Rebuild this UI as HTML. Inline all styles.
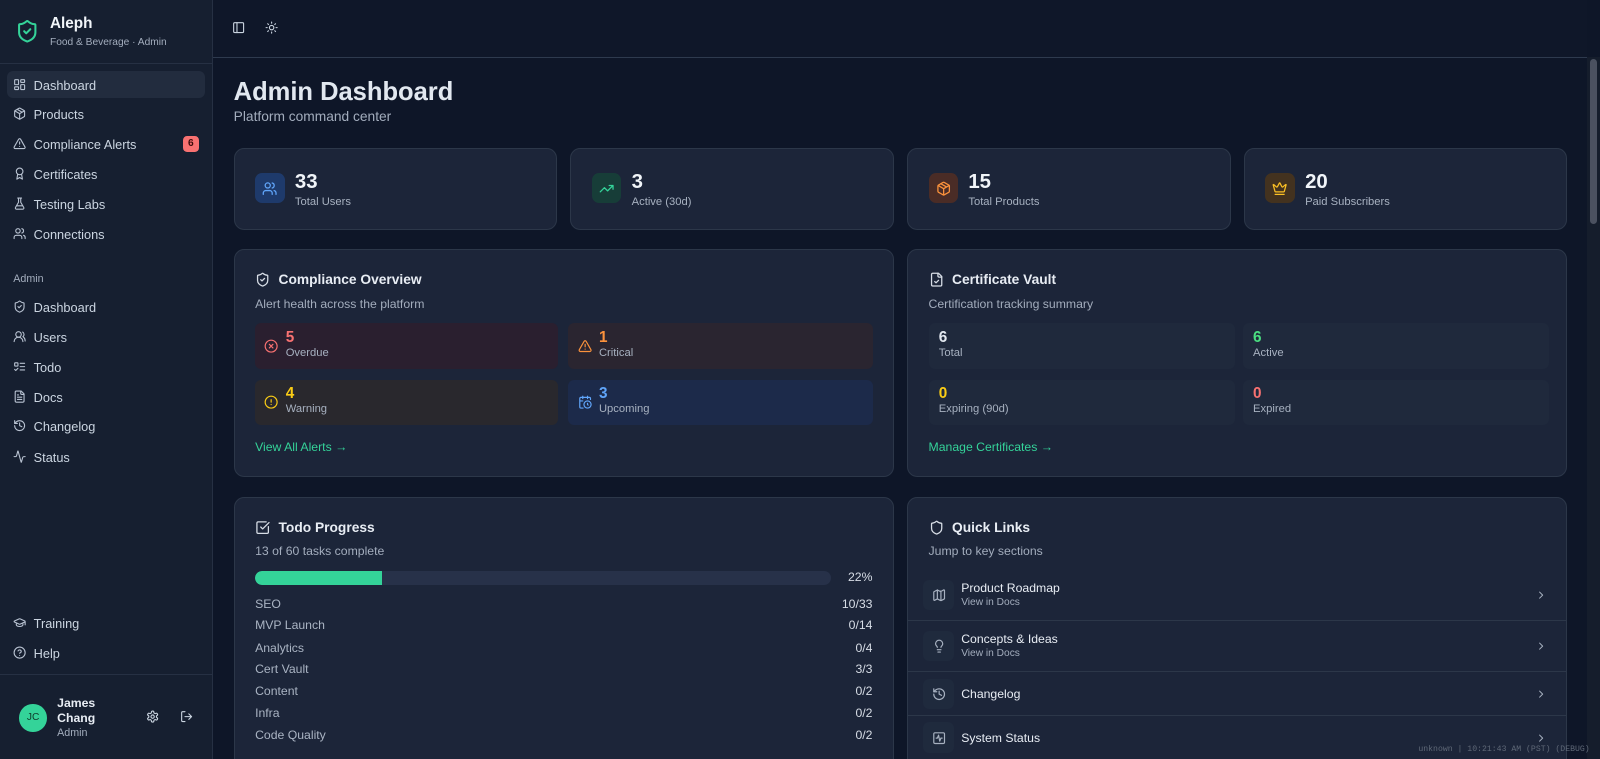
<!DOCTYPE html>
<html><head><meta charset="utf-8"><style>
html,body{margin:0;padding:0;width:1600px;height:759px;overflow:hidden;background:#0e1628;}
#w{position:relative;width:1568px;height:744px;zoom:1.02041;font-family:"Liberation Sans",sans-serif;color:#e2e8f0;}
.a{position:absolute;}
svg{position:absolute;fill:none;stroke:currentColor;stroke-width:2;stroke-linecap:round;stroke-linejoin:round;}
#sb{left:0;top:0;width:208px;height:744px;background:#161f30;border-right:1px solid #263043;}
.nav{position:absolute;left:7px;width:194px;height:26px;color:#cbd5e1;font-size:12.5px;}
.nav span{position:absolute;left:26px;top:6px;}
.nav svg{left:6px;top:6px;width:13px;height:13px;color:#b8c2d1}
.card{position:absolute;background:#1c2539;border:1px solid #2c3749;border-radius:10px;box-sizing:border-box;}
.num{position:absolute;font-size:20px;font-weight:bold;color:#f1f5f9;}
.lbl{position:absolute;font-size:11px;color:#a7b1c0;}
.ib{position:absolute;width:29px;height:29px;border-radius:7px;}
.ib svg{left:7px;top:7px;width:15px;height:15px}
.ttl{position:absolute;font-size:13.5px;font-weight:bold;color:#e8edf4;}
.sub{position:absolute;font-size:12px;color:#a3adbd;}
.tile{position:absolute;height:45px;border-radius:6px;}
.tile .n{position:absolute;left:30px;top:5px;font-size:15px;font-weight:bold;}
.tile .l{position:absolute;left:30px;top:23px;font-size:11px;color:#a7b1c0;}
.tile svg{left:9px;top:15px;width:14px;height:14px}
.ct .n,.ct .l{left:10px}
.link{position:absolute;font-size:12px;color:#34d399;}
.row{position:absolute;left:20px;right:20px;font-size:12px;color:#aab4c3;}
.row b{position:absolute;right:0;top:0;font-weight:normal;color:#d7dde6}
.ql{position:absolute;left:0;width:645px;border-top:1px solid #2c3749;}
.ql .t{position:absolute;left:52px;font-size:12px;color:#e8edf4;}
.ql .s{position:absolute;left:52px;font-size:10px;color:#a3adbd;}
.ql .ic{position:absolute;left:15px;width:30px;height:30px;border-radius:6px;background:#1f2a3d;}
.ql .ic svg{left:8px;top:8px;width:14px;height:14px;color:#a7b1c0}
.ql .ch{left:614px;width:12px;height:12px;color:#a7b1c0}
</style></head><body><div id="w">
<div class="a" id="sb">
 <svg style="left:15px;top:18px;width:24px;height:26px;color:#34d399" viewBox="0 0 24 24"><path d="M20 13c0 5-3.5 7.5-7.66 8.95a1 1 0 0 1-.67-.01C7.5 20.5 4 18 4 13V6a1 1 0 0 1 1-1c2 0 4.5-1.2 6.24-2.72a1.17 1.17 0 0 1 1.52 0C14.51 3.81 17 5 19 5a1 1 0 0 1 1 1z"/><path d="m9 12 2 2 4-4"/></svg>
 <div class="a" style="left:49px;top:15px;font-size:15px;font-weight:bold;color:#f1f5f9">Aleph</div>
 <div class="a" style="left:49px;top:36px;font-size:10px;color:#a3adbd">Food &amp; Beverage · Admin</div>
 <div class="a" style="left:0;top:62px;width:208px;border-top:1px solid #263043"></div>
 <div class="nav" style="top:70px;background:#222c3e;border-radius:6px"><svg viewBox="0 0 24 24"><rect x="3" y="3" width="7" height="9" rx="1"/><rect x="14" y="3" width="7" height="5" rx="1"/><rect x="14" y="12" width="7" height="9" rx="1"/><rect x="3" y="16" width="7" height="5" rx="1"/></svg><span>Dashboard</span></div>
 <div class="nav" style="top:99px"><svg viewBox="0 0 24 24"><path d="M11 21.7a2 2 0 0 0 2 0l7-4A2 2 0 0 0 21 16V8a2 2 0 0 0-1-1.7l-7-4a2 2 0 0 0-2 0l-7 4A2 2 0 0 0 3 8v8a2 2 0 0 0 1 1.7z"/><path d="M12 22V12M3.3 7 12 12l8.7-5M7.5 4.3l9 5.1"/></svg><span>Products</span></div>
 <div class="nav" style="top:128px"><svg viewBox="0 0 24 24"><path d="m21.7 18-8-14a2 2 0 0 0-3.5 0l-8 14A2 2 0 0 0 4 21h16a2 2 0 0 0 1.7-3"/><path d="M12 9v4M12 17h.01"/></svg><span>Compliance Alerts</span><div class="a" style="left:172px;top:5px;width:16px;height:16px;border-radius:4px;background:#f87171;color:#3b0a0a;font-size:10px;font-weight:bold;text-align:center;line-height:16px">6</div></div>
 <div class="nav" style="top:158px"><svg viewBox="0 0 24 24"><circle cx="12" cy="8" r="6"/><path d="M15.5 12.9 17 22l-5-3-5 3 1.5-9.1"/></svg><span>Certificates</span></div>
 <div class="nav" style="top:187px"><svg viewBox="0 0 24 24"><path d="M10 2v7.5L4.5 19A2 2 0 0 0 6.3 22h11.4a2 2 0 0 0 1.8-3L14 9.5V2M8.5 2h7M7 16h10"/></svg><span>Testing Labs</span></div>
 <div class="nav" style="top:216px"><svg viewBox="0 0 24 24"><path d="M16 21v-2a4 4 0 0 0-4-4H6a4 4 0 0 0-4 4v2"/><circle cx="9" cy="7" r="4"/><path d="M22 21v-2a4 4 0 0 0-3-3.9M16 3.1a4 4 0 0 1 0 7.8"/></svg><span>Connections</span></div>
 <div class="a" style="left:13px;top:268px;font-size:10.5px;color:#a3adbd">Admin</div>
 <div class="nav" style="top:288px"><svg viewBox="0 0 24 24"><path d="M20 13c0 5-3.5 7.5-7.66 8.95a1 1 0 0 1-.67-.01C7.5 20.5 4 18 4 13V6a1 1 0 0 1 1-1c2 0 4.5-1.2 6.24-2.72a1.17 1.17 0 0 1 1.52 0C14.51 3.81 17 5 19 5a1 1 0 0 1 1 1z"/><path d="m9 12 2 2 4-4"/></svg><span>Dashboard</span></div>
 <div class="nav" style="top:317px"><svg viewBox="0 0 24 24"><path d="M18 21a8 8 0 0 0-16 0"/><circle cx="10" cy="8" r="5"/><path d="M22 20c0-3.4-2-6.5-4-8a5 5 0 0 0-.45-8.3"/></svg><span>Users</span></div>
 <div class="nav" style="top:347px"><svg viewBox="0 0 24 24"><rect x="3" y="5" width="6" height="6" rx="1"/><path d="m3 17 2 2 4-4M13 6h8M13 12h8M13 18h8"/></svg><span>Todo</span></div>
 <div class="nav" style="top:376px"><svg viewBox="0 0 24 24"><path d="M15 2H6a2 2 0 0 0-2 2v16a2 2 0 0 0 2 2h12a2 2 0 0 0 2-2V7z"/><path d="M14 2v4a2 2 0 0 0 2 2h4M10 9H8M16 13H8M16 17H8"/></svg><span>Docs</span></div>
 <div class="nav" style="top:405px"><svg viewBox="0 0 24 24"><path d="M3 12a9 9 0 1 0 9-9 9.75 9.75 0 0 0-6.74 2.74L3 8"/><path d="M3 3v5h5M12 7v5l4 2"/></svg><span>Changelog</span></div>
 <div class="nav" style="top:435px"><svg viewBox="0 0 24 24"><path d="M22 12h-2.5a2 2 0 0 0-1.9 1.5l-2.4 8.4a.25.25 0 0 1-.5 0L9.2 2.1a.25.25 0 0 0-.5 0l-2.3 8.4A2 2 0 0 1 4.5 12H2"/></svg><span>Status</span></div>
 <div class="nav" style="top:598px"><svg viewBox="0 0 24 24"><path d="M21.4 10.9a1 1 0 0 0 0-1.8L12.9 5.2a2 2 0 0 0-1.7 0L2.6 9.1a1 1 0 0 0 0 1.8l8.6 3.9a2 2 0 0 0 1.7 0zM22 10v6M6 12.5V16a6 3 0 0 0 12 0v-3.5"/></svg><span>Training</span></div>
 <div class="nav" style="top:627px"><svg viewBox="0 0 24 24"><circle cx="12" cy="12" r="10"/><path d="M9.1 9a3 3 0 0 1 5.8 1c0 2-3 3-3 3M12 17h.01"/></svg><span>Help</span></div>
 <div class="a" style="left:0;top:661px;width:208px;border-top:1px solid #263043"></div>
 <div class="a" style="left:19px;top:690px;width:27px;height:27px;border-radius:50%;background:#34d399;color:#0f3b2b;font-size:10px;text-align:center;line-height:27px">JC</div>
 <div class="a" style="left:56px;top:682px;font-size:12px;font-weight:bold;line-height:15px;color:#e8edf4">James<br>Chang</div>
 <div class="a" style="left:56px;top:712px;font-size:10.5px;color:#a3adbd">Admin</div>
 <svg style="left:143px;top:696px;width:13px;height:13px;color:#cbd5e1" viewBox="0 0 24 24"><path d="M12.2 2h-.4a2 2 0 0 0-2 2v.2a2 2 0 0 1-1 1.7l-.4.3a2 2 0 0 1-2 0l-.2-.1a2 2 0 0 0-2.7.7l-.2.4a2 2 0 0 0 .7 2.7l.2.1a2 2 0 0 1 1 1.7v.5a2 2 0 0 1-1 1.7l-.2.1a2 2 0 0 0-.7 2.7l.2.4a2 2 0 0 0 2.7.7l.2-.1a2 2 0 0 1 2 0l.4.3a2 2 0 0 1 1 1.7v.2a2 2 0 0 0 2 2h.4a2 2 0 0 0 2-2v-.2a2 2 0 0 1 1-1.7l.4-.3a2 2 0 0 1 2 0l.2.1a2 2 0 0 0 2.7-.7l.2-.4a2 2 0 0 0-.7-2.7l-.2-.1a2 2 0 0 1-1-1.7v-.5a2 2 0 0 1 1-1.7l.2-.1a2 2 0 0 0 .7-2.7l-.2-.4a2 2 0 0 0-2.7-.7l-.2.1a2 2 0 0 1-2 0l-.4-.3a2 2 0 0 1-1-1.7V4a2 2 0 0 0-2-2z"/><circle cx="12" cy="12" r="3"/></svg>
 <svg style="left:176px;top:696px;width:13px;height:13px;color:#cbd5e1" viewBox="0 0 24 24"><path d="M9 21H5a2 2 0 0 1-2-2V5a2 2 0 0 1 2-2h4M16 17l5-5-5-5M21 12H9"/></svg>
</div>
<div class="a" style="left:209px;top:0;width:1346px;height:56px;border-bottom:1px solid #2e3a4e;background:#0f1729"></div>
<svg style="left:227px;top:21px;width:13px;height:13px;color:#cbd5e1" viewBox="0 0 24 24"><rect x="3" y="3" width="18" height="18" rx="2"/><path d="M9 3v18"/></svg>
<svg style="left:260px;top:21px;width:13px;height:13px;color:#cbd5e1" viewBox="0 0 24 24"><circle cx="12" cy="12" r="4"/><path d="M12 2v2M12 20v2M4.9 4.9l1.4 1.4M17.7 17.7l1.4 1.4M2 12h2M20 12h2M6.3 17.7l-1.4 1.4M19.1 4.9l-1.4 1.4"/></svg>
<div class="a" style="left:229px;top:76px;font-size:25px;font-weight:bold;color:#e2e8f0">Admin Dashboard</div>
<div class="a" style="left:229px;top:107px;font-size:13.5px;color:#a3adbd">Platform command center</div>

<div class="card" style="left:229px;top:145px;width:317px;height:80px"><div class="ib" style="left:20px;top:24px;background:#1e3a6b"><svg viewBox="0 0 24 24" style="color:#60a5fa"><path d="M16 21v-2a4 4 0 0 0-4-4H6a4 4 0 0 0-4 4v2"/><circle cx="9" cy="7" r="4"/><path d="M22 21v-2a4 4 0 0 0-3-3.9M16 3.1a4 4 0 0 1 0 7.8"/></svg></div><div class="num" style="left:59px;top:22px">33</div><div class="lbl" style="left:59px;top:46px">Total Users</div></div>
<div class="card" style="left:559px;top:145px;width:317px;height:80px"><div class="ib" style="left:20px;top:24px;background:#173d38"><svg viewBox="0 0 24 24" style="color:#34d399"><path d="m22 7-8.5 8.5-5-5L2 17M16 7h6v6"/></svg></div><div class="num" style="left:59px;top:22px">3</div><div class="lbl" style="left:59px;top:46px">Active (30d)</div></div>
<div class="card" style="left:889px;top:145px;width:317px;height:80px"><div class="ib" style="left:20px;top:24px;background:#4a2c26"><svg viewBox="0 0 24 24" style="color:#fb923c"><path d="M11 21.7a2 2 0 0 0 2 0l7-4A2 2 0 0 0 21 16V8a2 2 0 0 0-1-1.7l-7-4a2 2 0 0 0-2 0l-7 4A2 2 0 0 0 3 8v8a2 2 0 0 0 1 1.7z"/><path d="M12 22V12M3.3 7 12 12l8.7-5M7.5 4.3l9 5.1"/></svg></div><div class="num" style="left:59px;top:22px">15</div><div class="lbl" style="left:59px;top:46px">Total Products</div></div>
<div class="card" style="left:1219px;top:145px;width:317px;height:80px"><div class="ib" style="left:20px;top:24px;background:#43321f"><svg viewBox="0 0 24 24" style="color:#fbbf24"><path d="M11.6 3.3a.5.5 0 0 1 .9 0l3 5.7a1 1 0 0 0 1.5.3l4.3-3.7a.5.5 0 0 1 .8.5l-2.8 10.2a1 1 0 0 1-1 .7H5.7a1 1 0 0 1-1-.7L1.9 6.1a.5.5 0 0 1 .8-.5L7 9.3a1 1 0 0 0 1.5-.3zM5 21h14"/></svg></div><div class="num" style="left:59px;top:22px">20</div><div class="lbl" style="left:59px;top:46px">Paid Subscribers</div></div>

<div class="card" style="left:229px;top:244px;width:647px;height:223px">
 <svg style="left:20px;top:22px;width:15px;height:15px;color:#d7dde6" viewBox="0 0 24 24"><path d="M20 13c0 5-3.5 7.5-7.66 8.95a1 1 0 0 1-.67-.01C7.5 20.5 4 18 4 13V6a1 1 0 0 1 1-1c2 0 4.5-1.2 6.24-2.72a1.17 1.17 0 0 1 1.52 0C14.51 3.81 17 5 19 5a1 1 0 0 1 1 1z"/><path d="m9 12 2 2 4-4"/></svg>
 <div class="ttl" style="left:43px;top:22px">Compliance Overview</div>
 <div class="sub" style="left:20px;top:46px">Alert health across the platform</div>
 <div class="tile" style="left:20px;top:72px;width:297px;background:#2a1f2f"><svg viewBox="0 0 24 24" style="color:#f87171"><circle cx="12" cy="12" r="10"/><path d="m15 9-6 6M9 9l6 6"/></svg><div class="n" style="color:#f87171">5</div><div class="l">Overdue</div></div>
 <div class="tile" style="left:327px;top:72px;width:299px;background:#2a2530"><svg viewBox="0 0 24 24" style="color:#fb923c"><path d="m21.7 18-8-14a2 2 0 0 0-3.5 0l-8 14A2 2 0 0 0 4 21h16a2 2 0 0 0 1.7-3"/><path d="M12 9v4M12 17h.01"/></svg><div class="n" style="color:#fb923c">1</div><div class="l">Critical</div></div>
 <div class="tile" style="left:20px;top:127px;width:297px;background:#29282d"><svg viewBox="0 0 24 24" style="color:#facc15"><circle cx="12" cy="12" r="10"/><path d="M12 8v4M12 16h.01"/></svg><div class="n" style="color:#facc15">4</div><div class="l">Warning</div></div>
 <div class="tile" style="left:327px;top:127px;width:299px;background:#1c2a4a"><svg viewBox="0 0 24 24" style="color:#60a5fa"><path d="M21 7.5V6a2 2 0 0 0-2-2H5a2 2 0 0 0-2 2v14a2 2 0 0 0 2 2h3.5M16 2v4M8 2v4M3 10h5"/><circle cx="16" cy="16" r="6"/><path d="M16 14v2l1 1"/></svg><div class="n" style="color:#60a5fa">3</div><div class="l">Upcoming</div></div>
 <div class="link" style="left:20px;top:186px">View All Alerts →</div>
</div>

<div class="card" style="left:889px;top:244px;width:647px;height:223px">
 <svg style="left:20px;top:22px;width:15px;height:15px;color:#d7dde6" viewBox="0 0 24 24"><path d="M15 2H6a2 2 0 0 0-2 2v16a2 2 0 0 0 2 2h12a2 2 0 0 0 2-2V7z"/><path d="M14 2v4a2 2 0 0 0 2 2h4M9 15l2 2 4-4"/></svg>
 <div class="ttl" style="left:43px;top:22px">Certificate Vault</div>
 <div class="sub" style="left:20px;top:46px">Certification tracking summary</div>
 <div class="tile ct" style="left:20px;top:72px;width:300px;background:#1f293c"><div class="n">6</div><div class="l">Total</div></div>
 <div class="tile ct" style="left:328px;top:72px;width:300px;background:#1f293c"><div class="n" style="color:#4ade80">6</div><div class="l">Active</div></div>
 <div class="tile ct" style="left:20px;top:127px;width:300px;background:#1f293c"><div class="n" style="color:#facc15">0</div><div class="l">Expiring (90d)</div></div>
 <div class="tile ct" style="left:328px;top:127px;width:300px;background:#1f293c"><div class="n" style="color:#f87171">0</div><div class="l">Expired</div></div>
 <div class="link" style="left:20px;top:186px">Manage Certificates →</div>
</div>

<div class="card" style="left:229px;top:487px;width:647px;height:270px">
 <svg style="left:20px;top:22px;width:15px;height:15px;color:#d7dde6" viewBox="0 0 24 24"><path d="M21 10.5V19a2 2 0 0 1-2 2H5a2 2 0 0 1-2-2V5a2 2 0 0 1 2-2h12.5"/><path d="m9 11 3 3L22 4"/></svg>
 <div class="ttl" style="left:43px;top:22px">Todo Progress</div>
 <div class="sub" style="left:20px;top:45px">13 of 60 tasks complete</div>
 <div class="a" style="left:20px;top:72px;width:564px;height:13px;border-radius:7px;background:#273149;overflow:hidden"><div style="width:124px;height:13px;background:#34d399;border-radius:7px 0 0 7px"></div></div>
 <div class="a" style="right:20px;top:71px;font-size:12px;color:#d7dde6">22%</div>
 <div class="row" style="top:97px">SEO<b>10/33</b></div>
 <div class="row" style="top:118px">MVP Launch<b>0/14</b></div>
 <div class="row" style="top:140px">Analytics<b>0/4</b></div>
 <div class="row" style="top:161px">Cert Vault<b>3/3</b></div>
 <div class="row" style="top:182px">Content<b>0/2</b></div>
 <div class="row" style="top:204px">Infra<b>0/2</b></div>
 <div class="row" style="top:225px">Code Quality<b>0/2</b></div>
</div>

<div class="card" style="left:889px;top:487px;width:647px;height:270px;overflow:hidden">
 <svg style="left:20px;top:22px;width:15px;height:15px;color:#d7dde6" viewBox="0 0 24 24"><path d="M20 13c0 5-3.5 7.5-7.66 8.95a1 1 0 0 1-.67-.01C7.5 20.5 4 18 4 13V6a1 1 0 0 1 1-1c2 0 4.5-1.2 6.24-2.72a1.17 1.17 0 0 1 1.52 0C14.51 3.81 17 5 19 5a1 1 0 0 1 1 1z"/></svg>
 <div class="ttl" style="left:43px;top:22px">Quick Links</div>
 <div class="sub" style="left:20px;top:45px">Jump to key sections</div>
 <div class="ql" style="top:75px;height:45px;border-top:none"><div class="ic" style="top:5px"><svg viewBox="0 0 24 24"><path d="M14.1 5.9 9.9 3.8a2 2 0 0 0-1.8 0L3.6 6.1A1 1 0 0 0 3 7v12.8a1 1 0 0 0 1.4.9l3.7-1.9a2 2 0 0 1 1.8 0l4.2 2.1a2 2 0 0 0 1.8 0l4.5-2.3a1 1 0 0 0 .6-.9V4.2a1 1 0 0 0-1.4-.9l-3.7 1.9a2 2 0 0 1-1.8 0zM15 5.8v15M9 3.2v15"/></svg></div><div class="t" style="top:6px">Product Roadmap</div><div class="s" style="top:22px">View in Docs</div><svg class="ch" style="top:14px" viewBox="0 0 24 24"><path d="m9 18 6-6-6-6"/></svg></div>
 <div class="ql" style="top:120px;height:50px"><div class="ic" style="top:9px"><svg viewBox="0 0 24 24"><path d="M15 14c.2-1 .7-1.7 1.5-2.5 1-.9 1.5-2.2 1.5-3.5A6 6 0 0 0 6 8c0 1 .2 2.2 1.5 3.5.7.7 1.3 1.5 1.5 2.5M9 18h6M10 22h4"/></svg></div><div class="t" style="top:10px">Concepts &amp; Ideas</div><div class="s" style="top:26px">View in Docs</div><svg class="ch" style="top:18px" viewBox="0 0 24 24"><path d="m9 18 6-6-6-6"/></svg></div>
 <div class="ql" style="top:170px;height:43px"><div class="ic" style="top:6px"><svg viewBox="0 0 24 24"><path d="M3 12a9 9 0 1 0 9-9 9.75 9.75 0 0 0-6.74 2.74L3 8"/><path d="M3 3v5h5M12 7v5l4 2"/></svg></div><div class="t" style="top:14px">Changelog</div><svg class="ch" style="top:15px" viewBox="0 0 24 24"><path d="m9 18 6-6-6-6"/></svg></div>
 <div class="ql" style="top:213px;height:50px"><div class="ic" style="top:6px"><svg viewBox="0 0 24 24"><rect x="3" y="3" width="18" height="18" rx="2"/><path d="M17 12h-2l-2 5-2-10-2 5H7"/></svg></div><div class="t" style="top:14px">System Status</div><svg class="ch" style="top:15px" viewBox="0 0 24 24"><path d="m9 18 6-6-6-6"/></svg></div>
</div>

<div class="a" style="left:1555px;top:56px;width:13px;height:688px;background:#151d2c"></div>
<div class="a" style="left:1558px;top:58px;width:7px;height:162px;border-radius:4px;background:#4b5160"></div>
<div class="a" style="left:1390px;top:730px;font-family:'Liberation Mono',monospace;font-size:8px;color:#5f6877">unknown | 10:21:43 AM (PST) (DEBUG)</div>
</div></body></html>
